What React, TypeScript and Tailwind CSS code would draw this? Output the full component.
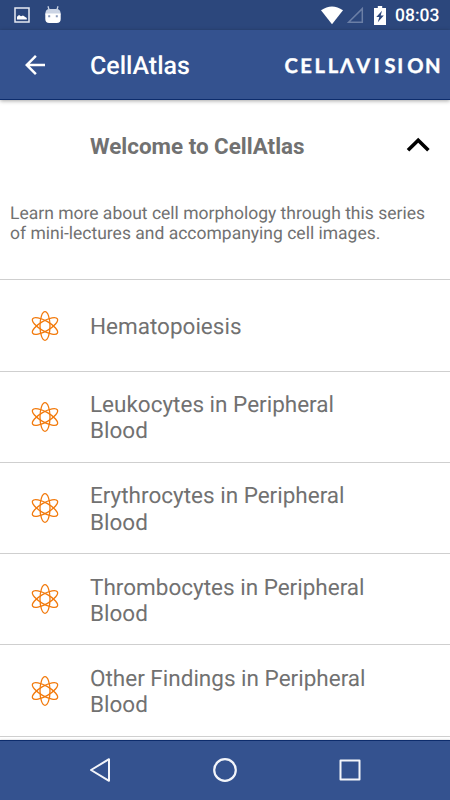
import React, { useState } from "react";

const lectures = [
  "Hematopoiesis",
  "Leukocytes in Peripheral Blood",
  "Erythrocytes in Peripheral Blood",
  "Thrombocytes in Peripheral Blood",
  "Other Findings in Peripheral Blood",
];

function AtomIcon() {
  return (
    <svg
      className="w-[30px] h-[30px] shrink-0"
      viewBox="-15 -15 30 30"
      fill="none"
      stroke="#f27a0c"
      strokeWidth="1.3"
    >
      {[0, 60, 120].map((angle) => (
        <ellipse key={angle} rx="5" ry="14.3" transform={`rotate(${angle})`} />
      ))}
    </svg>
  );
}

function Logo() {
  return (
    <svg
      className="w-[160px] h-6 shrink-0"
      viewBox="0 0 160 24"
      fill="white"
      stroke="white"
      strokeWidth="0.4"
    >
      <text
        x="0.5 16.2 30.5 43.8 56 72.2 89.7 100.5 113.3 123.2 141"
        y="19.5"
        fontFamily="Lato, sans-serif"
        fontWeight="700"
        fontSize="20.2"
      >
        CELLΛVISION
      </text>
    </svg>
  );
}

function StatusBar() {
  return (
    <div className="h-[30px] shrink-0 bg-[#2c477c] flex items-center text-white">
      <svg className="ml-[14px] w-4 h-4" viewBox="0 0 16 16">
        <rect x="1" y="1" width="14" height="14" fill="none" stroke="#e6eaf2" strokeWidth="1.5" />
        <path d="M3 12.5V9.8l2-1.8 2 1.2 2-.7 3.8 2.5v1.5z" fill="white" />
      </svg>
      <svg className="ml-[14px] w-[18px] h-[19px]" viewBox="0 0 18 19">
        <path d="M4 .2l1.2 4M14 .2l-1.2 4" stroke="#cbd4e4" strokeWidth="1.3" />
        <path d="M1.3 8.4Q1.3 3 5.5 3h7q4.2 0 4.2 5.4z" fill="#cbd4e4" />
        <path d="M1.3 7.5h15.4v5.5q0 4-4 4H5.3q-4 0-4-4z" fill="white" />
        <path d="M4.2 9.2h2v2h-2zM11.8 9.2h2v2h-2z" fill="#8797b8" />
      </svg>
      <svg className="ml-auto w-6 h-[19px]" viewBox="0 0 24 19">
        <path d="M1 4.3Q12-3.4 23 4.3L12 18.3z" fill="white" />
      </svg>
      <svg className="ml-[2px] w-[18px] h-[18px]" viewBox="0 0 18 18">
        <path d="M2.6 16.3L16.3 2.6v13.7z" fill="none" stroke="#6b7fa6" strokeWidth="1.5" />
      </svg>
      <svg className="ml-[10px] w-3 h-[19px]" viewBox="0 0 12 19">
        <path d="M3.8 0h4.4v2H12v17H0V2h3.8z" fill="white" />
        <path d="M8 4.7L2.3 11h3L3.8 16.3 9.8 9.5H6.7z" fill="#2c477c" />
      </svg>
      <span className="ml-[9px] mr-[10px] w-[45px] pt-[2px] text-[17.5px] leading-[30px] font-medium whitespace-nowrap">
        08:03
      </span>
    </div>
  );
}

function NavigationBar() {
  return (
    <nav className="mt-auto h-[60px] shrink-0 relative bg-[#34528f] border-t border-[#0d2c6c] shadow-[0_0_2px_rgba(0,0,0,0.25)] pb-[2px] flex items-center justify-center gap-[95px]">
      <button aria-label="Back">
        <svg className="w-[30px] h-[30px]" viewBox="0 0 30 30" fill="none" stroke="#f3f5fa" strokeWidth="2" strokeLinejoin="round">
          <path d="M24 4.2v21.6L6 15z" />
        </svg>
      </button>
      <button aria-label="Home">
        <svg className="w-[30px] h-[30px]" viewBox="0 0 30 30" fill="none" stroke="#f3f5fa" strokeWidth="2.2">
          <circle cx="15" cy="15" r="10.8" />
        </svg>
      </button>
      <button aria-label="Recent apps">
        <svg className="w-[30px] h-[30px]" viewBox="0 0 30 30" fill="none" stroke="#f3f5fa" strokeWidth="2" strokeLinejoin="round">
          <rect x="5.5" y="5.5" width="19" height="19" />
        </svg>
      </button>
    </nav>
  );
}

export default function App() {
  const [open, setOpen] = useState(true);

  return (
    <div className="w-[450px] h-[800px] overflow-hidden bg-white flex flex-col font-['Roboto',sans-serif] text-[#717171] [text-rendering:geometricPrecision]">
      <StatusBar />

      {/* App bar */}
      <header className="h-[70px] shrink-0 relative bg-[#34528f] border-b border-[#0d2c6c] shadow-[0_1px_4px_rgba(0,0,0,0.35)] flex items-center text-white">
        <button aria-label="Back" className="ml-5 pt-px">
          <svg className="w-[30px] h-[30px]" viewBox="0 0 24 24" fill="white">
            <path d="M20 11H7.83l5.59-5.59L12 4l-8 8 8 8 1.41-1.41L7.83 13H20z" />
          </svg>
        </button>
        <h1 className="ml-10 pt-[5px] text-[25px] leading-[30px] font-medium">CellAtlas</h1>
        <div className="ml-auto mr-[6px]">
          <Logo />
        </div>
      </header>

      {/* Introduction */}
      <section className="h-[179.4px] shrink-0">
        <button
          className="w-full h-[90px] pl-[90px] pr-[17px] flex items-center justify-between"
          onClick={() => setOpen(!open)}
        >
          <span className="pt-[3px] text-[22.4px] font-bold">Welcome to CellAtlas</span>
          <svg className="w-[30px] h-[30px]" viewBox="0 0 30 30" fill="none" stroke="black" strokeWidth="3.6">
            <path d="M5 20.3L15.2 10.3l10.2 10" />
          </svg>
        </button>
        {open && (
          <p className="px-[10px] pt-[13.6px] text-[17.5px] leading-[20.5px]">
            Learn more about cell morphology through this series of mini-lectures
            and accompanying cell images.
          </p>
        )}
      </section>

      {/* Lectures */}
      <ul className="border-b border-[#cfcfcf]">
        {lectures.map((lecture) => (
          <li
            key={lecture}
            className="h-[91.25px] border-t border-[#cfcfcf] pl-[30px] pr-20 flex items-center"
          >
            <AtomIcon />
            <span className="ml-[30px] text-[22.5px] leading-[26.3px] pt-[3.4px]">
              {lecture}
            </span>
          </li>
        ))}
      </ul>

      <NavigationBar />
    </div>
  );
}
